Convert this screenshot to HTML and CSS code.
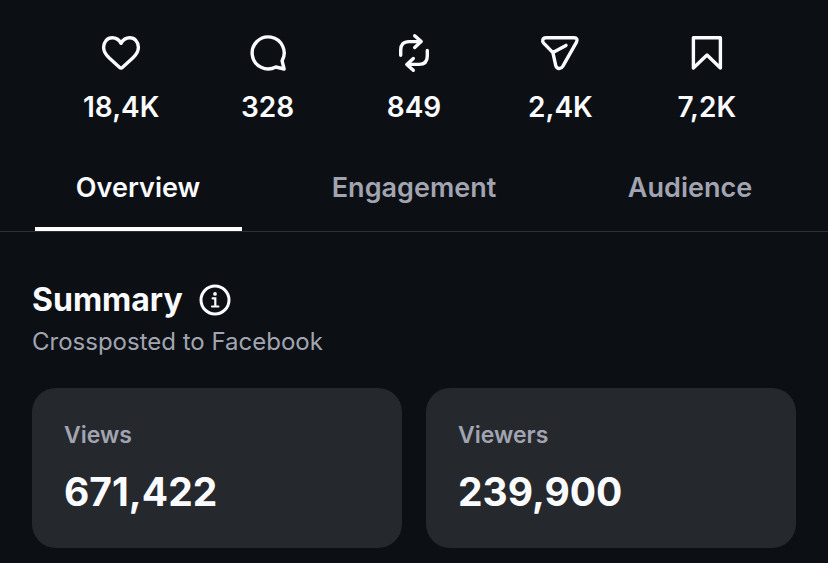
FILE: index.html
```html
<!DOCTYPE html>
<html lang="en">
<head>
<meta charset="utf-8">
<meta name="viewport" content="width=device-width, initial-scale=1">
<title>Insights</title>
<link rel="stylesheet" href="styles.css">
</head>
<body>
<main>
  <ul class="stats">
    <li class="stat">
      <svg class="icon" viewBox="0 0 40 40" aria-hidden="true"><path d="M20 10.3C18 6.8 15 4.8 11.3 4.8C6.2 4.8 2.6 8.9 2.6 14.3C2.6 18.4 4.7 21.7 8 24.7L18.4 34.2Q20 35.6 21.6 34.2L32 24.7C35.3 21.7 37.4 18.4 37.4 14.3C37.4 8.9 33.8 4.8 28.7 4.8C25 4.8 22 6.8 20 10.3Z"/></svg>
      <span>18,4K</span>
    </li>
    <li class="stat">
      <svg class="icon" viewBox="0 0 40 40" aria-hidden="true"><path d="M34.1 27.8A16 16 0 1 0 27.8 34L36.1 36Z"/></svg>
      <span>328</span>
    </li>
    <li class="stat">
      <svg class="icon" viewBox="0 0 40 40" aria-hidden="true"><path d="M6.7 22.3V17Q6.7 8.6 15 8.6H27.2M20.7 2.7L27.2 8.6L20.7 14.5M33.3 17.4V23Q33.3 31.4 25 31.4H12.8M19.3 25.5L12.8 31.4L19.3 37.3"/></svg>
      <span>849</span>
    </li>
    <li class="stat">
      <svg class="icon" viewBox="0 0 40 40" aria-hidden="true"><path d="M6 4.8H34Q38.4 5 36.5 9.2L22.9 33.2C20.7 36.8 16.6 36 15.7 32.4L12.9 19.6L3.9 10.4C1.5 7.8 2.7 4.9 6 4.8ZM12.9 19.6L26 12.4"/></svg>
      <span>2,4K</span>
    </li>
    <li class="stat">
      <svg class="icon" viewBox="0 0 40 40" aria-hidden="true"><path d="M6.4 4.8H33.4V35L20 22L6.4 35Z"/></svg>
      <span>7,2K</span>
    </li>
  </ul>

  <nav class="tabs" aria-label="Insights sections">
    <button class="tab tab-active" type="button" aria-current="page">Overview</button>
    <button class="tab" type="button">Engagement</button>
    <button class="tab" type="button">Audience</button>
  </nav>

  <section class="summary">
    <header class="heading">
      <h1>Summary</h1>
      <button class="info" type="button" aria-label="About this summary">
        <svg viewBox="0 0 32 32" aria-hidden="true"><circle class="ring" cx="16" cy="16" r="14"/><circle class="dot" cx="16" cy="9.9" r="1.9"/><path class="stem" d="M13.6 14.3H16.3V22.5M13 22.5H19.4"/></svg>
      </button>
    </header>
    <p class="note">Crossposted to Facebook</p>
    <dl class="cards">
      <div class="card">
        <dt>Views</dt>
        <dd>671,422</dd>
      </div>
      <div class="card">
        <dt>Viewers</dt>
        <dd>239,900</dd>
      </div>
    </dl>
  </section>
</main>
</body>
</html>
```

FILE: styles.css
```css
* {
  box-sizing: border-box;
  margin: 0;
  padding: 0;
}

body {
  background: #0c0f14;
  color: #fafbfe;
  font-family: Inter, "Liberation Sans", sans-serif;
}

button {
  border: 0;
  background: none;
  color: inherit;
  font: inherit;
  cursor: pointer;
}

.stats {
  display: grid;
  grid-template-columns: repeat(5, 1fr);
  padding: 33px 48px 18px;
  list-style: none;
}

.stat {
  display: flex;
  flex-direction: column;
  align-items: center;
  gap: 16px;
  font-size: 28px;
  font-weight: 600;
  line-height: 36px;
}

.icon {
  width: 40px;
  height: 40px;
  fill: none;
  stroke: currentColor;
  stroke-width: 3.4;
  stroke-linecap: round;
  stroke-linejoin: round;
}

.tabs {
  display: grid;
  grid-template-columns: repeat(3, 1fr);
  border-bottom: 1px solid #2e3035;
}

.tab {
  display: flex;
  flex-direction: column;
  align-items: center;
  padding-top: 27px;
  height: 88px;
  color: #a2a5b1;
  font-size: 27px;
  font-weight: 600;
  line-height: 36px;
}

.tab-active {
  color: #fafbfe;
}

.tab-active::after {
  content: "";
  width: 75%;
  height: 4px;
  margin-top: auto;
  background: #fff;
}

.summary {
  padding: 48px 32px 16px;
}

.heading {
  display: flex;
  align-items: center;
  gap: 16px;
}

h1 {
  font-size: 32px;
  font-weight: 700;
  line-height: 40px;
}

.info {
  width: 32px;
  height: 32px;
}

.info svg {
  display: block;
}

.ring,
.stem {
  fill: none;
  stroke: currentColor;
}

.ring {
  stroke-width: 3;
}

.stem {
  stroke-width: 2.2;
  stroke-linecap: round;
}

.dot {
  fill: currentColor;
}

.note {
  margin-top: 8px;
  color: #a2a5b1;
  font-size: 24px;
  line-height: 28px;
}

.cards {
  display: grid;
  grid-template-columns: 1fr 1fr;
  gap: 24px;
  margin-top: 32px;
}

.card {
  padding: 32px;
  border-radius: 24px;
  background: #25282d;
}

dt {
  color: #a2a5b1;
  font-size: 23px;
  font-weight: 600;
  line-height: 30px;
}

dd {
  margin-top: 18px;
  font-size: 39px;
  font-weight: 700;
  line-height: 48px;
}
```
